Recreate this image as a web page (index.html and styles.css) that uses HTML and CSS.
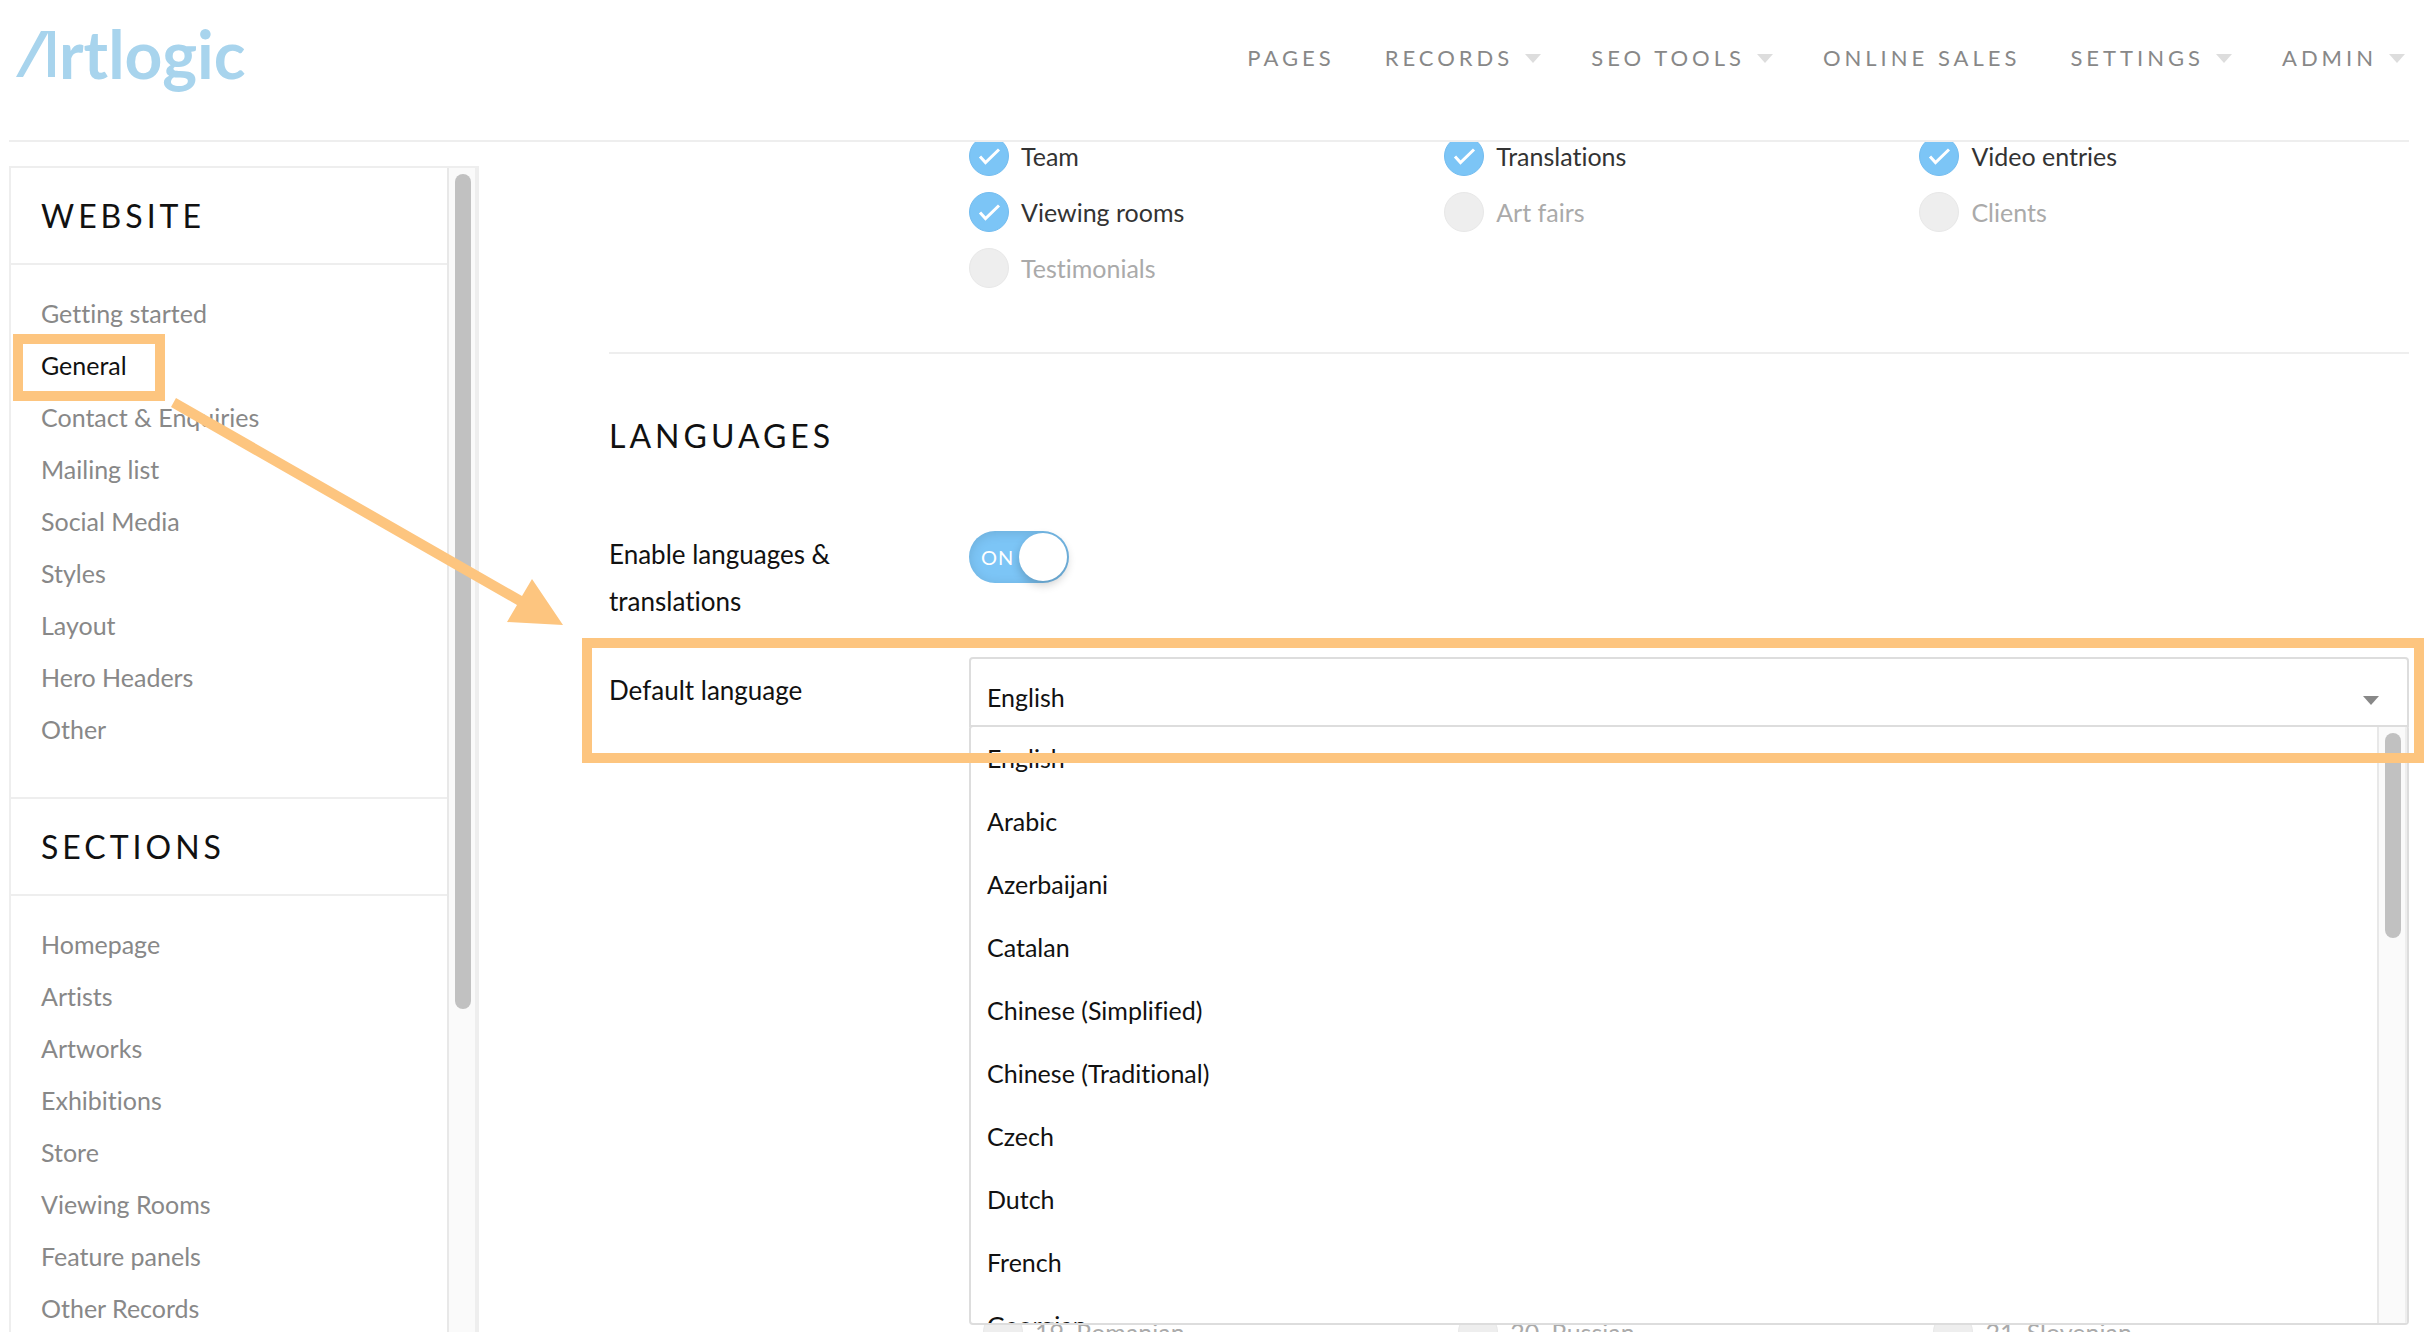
FILE: index.html
```html
<!DOCTYPE html>
<html lang="en">
<head>
    <meta charset="UTF-8">
    <meta name="viewport" content="width=device-width, initial-scale=1.0">
    <title>Artlogic - General settings</title>
    <link rel="stylesheet" href="styles.css">
</head>
<body>
<svg class="defs" aria-hidden="true">
    <symbol id="tick" viewBox="0 0 40 40">
        <path d="M11 20.500L16.500 26.500L30 13.500" fill="none" stroke="#fff" stroke-width="3"/>
    </symbol>
</svg>

<header class="header">
    <a class="logo" href="#" aria-label="Artlogic">
        <svg class="logo-mark" width="40" height="46" viewBox="0 0 40 46" aria-hidden="true">
            <path d="M0 46L25 0H39V46H32V2L7 46Z" fill="#a8d4ed"/>
        </svg>
        <span class="logo-text">rtlogic</span>
    </a>
    <nav class="nav">
        <a href="#">PAGES</a>
        <a href="#" class="has-menu">RECORDS</a>
        <a href="#" class="has-menu">SEO TOOLS</a>
        <a href="#">ONLINE SALES</a>
        <a href="#" class="has-menu">SETTINGS</a>
        <a href="#" class="has-menu">ADMIN</a>
    </nav>
</header>

<div class="page">
    <aside class="sidebar">
        <div class="sidebar-content">
            <h2 class="sidebar-title">WEBSITE</h2>
            <ul class="sidebar-list">
                <li><a href="#">Getting started</a></li>
                <li><a href="#" class="active">General</a></li>
                <li><a href="#">Contact &amp; Enquiries</a></li>
                <li><a href="#">Mailing list</a></li>
                <li><a href="#">Social Media</a></li>
                <li><a href="#">Styles</a></li>
                <li><a href="#">Layout</a></li>
                <li><a href="#">Hero Headers</a></li>
                <li><a href="#">Other</a></li>
            </ul>
            <h2 class="sidebar-title">SECTIONS</h2>
            <ul class="sidebar-list">
                <li><a href="#">Homepage</a></li>
                <li><a href="#">Artists</a></li>
                <li><a href="#">Artworks</a></li>
                <li><a href="#">Exhibitions</a></li>
                <li><a href="#">Store</a></li>
                <li><a href="#">Viewing Rooms</a></li>
                <li><a href="#">Feature panels</a></li>
                <li><a href="#">Other Records</a></li>
            </ul>
        </div>
        <div class="scrollbar"><div class="thumb"></div></div>
    </aside>

    <main class="main">
        <div class="options sections">
            <label class="option"><span class="check"><input type="checkbox" checked><svg><use href="#tick"/></svg></span>Team</label>
            <label class="option"><span class="check"><input type="checkbox" checked><svg><use href="#tick"/></svg></span>Translations</label>
            <label class="option"><span class="check"><input type="checkbox" checked><svg><use href="#tick"/></svg></span>Video entries</label>
            <label class="option"><span class="check"><input type="checkbox" checked><svg><use href="#tick"/></svg></span>Viewing rooms</label>
            <label class="option off"><span class="check"><input type="checkbox"></span>Art fairs</label>
            <label class="option off"><span class="check"><input type="checkbox"></span>Clients</label>
            <label class="option off"><span class="check"><input type="checkbox"></span>Testimonials</label>
        </div>

        <section class="languages">
            <h2>LANGUAGES</h2>
            <div class="row">
                <label class="row-label" for="enable">Enable languages &amp; translations</label>
                <div class="toggle">
                    <input type="checkbox" id="enable" checked>
                    <span class="toggle-text">ON</span>
                    <span class="knob"></span>
                </div>
            </div>
            <div class="row highlighted">
                <label class="row-label" for="language">Default language</label>
                <div class="dropdown">
                    <select id="language">
                        <option>English</option>
                    </select>
                    <div class="menu">
                        <ul class="menu-list" role="listbox" aria-label="Default language">
                            <li role="option" aria-selected="true">English</li>
                            <li role="option">Arabic</li>
                            <li role="option">Azerbaijani</li>
                            <li role="option">Catalan</li>
                            <li role="option">Chinese (Simplified)</li>
                            <li role="option">Chinese (Traditional)</li>
                            <li role="option">Czech</li>
                            <li role="option">Dutch</li>
                            <li role="option">French</li>
                            <li role="option">Georgian</li>
                        </ul>
                        <div class="scrollbar"><div class="thumb"></div></div>
                    </div>
                </div>
            </div>
            <div class="options translations">
                <label class="option off"><span class="check"><input type="checkbox"></span>19. Romanian</label>
                <label class="option off"><span class="check"><input type="checkbox"></span>20. Russian</label>
                <label class="option off"><span class="check"><input type="checkbox"></span>21. Slovenian</label>
            </div>
        </section>
    </main>

    <!-- arrow from the sidebar link to the language field -->
    <svg class="arrow" width="392" height="228" viewBox="0 0 392 228" aria-hidden="true">
        <path d="M5 0L351 198L361 181L392 227L336 224L346 207L0 9Z" fill="#fdc57f"/>
    </svg>
</div>
</body>
</html>
```
FILE: styles.css
```css
* {
    box-sizing: border-box;
}

body {
    font-family: Lato, "Open Sans", sans-serif;
    font-size: 25px;
    font-variant-ligatures: none;
    color: #111;
    background-color: #fff;
    display: flex;
    flex-direction: column;
    height: 100vh;
    margin: 0;
    overflow: hidden;
}

a {
    color: #888;
    text-decoration: none;
}

h2 {
    font-size: 32px;
    font-weight: 400;
    letter-spacing: 4px;
    margin: 0;
}

ul {
    list-style: none;
    margin: 0;
    padding: 0;
}

.defs {
    position: absolute;
    width: 0;
    height: 0;
}

/* Header */
.header {
    display: flex;
    justify-content: space-between;
    align-items: flex-start;
    flex: none;
    height: 142px;
    margin: 0 25px 0 9px;
    border-bottom: 2px solid #eee;
}

.logo {
    display: flex;
    align-items: flex-start;
    padding: 31px 0 0 7px;
}

.logo-text {
    font-size: 66px;
    font-weight: 700;
    line-height: 66px;
    margin-top: -10px;
    padding-left: 3px;
    color: #a8d4ed;
}

.nav {
    display: flex;
    gap: 50px;
    padding: 42px 4px 0 0;
}

.nav a {
    display: flex;
    align-items: center;
    font-size: 22px;
    line-height: 32px;
    letter-spacing: 4px;
}

.nav .has-menu::after {
    content: "";
    margin-left: 12px;
    border: 8px solid transparent;
    border-top: 9px solid #ddd;
    border-bottom: 0;
}

/* Sidebar */
.page {
    display: flex;
    flex: 1;
    min-height: 0;
    position: relative;
}

.sidebar {
    display: flex;
    flex: none;
    width: 470px;
    margin: 24px 0 0 9px;
    border: 2px solid #eee;
    border-right-width: 4px;
    border-bottom: 0;
}

.sidebar-content {
    flex: 1;
}

.sidebar-title {
    padding: 0 30px;
    line-height: 95px;
    border-bottom: 2px solid #eee;
}

.sidebar-list {
    padding: 22px 0 42px;
}

.sidebar-list + .sidebar-title {
    border-top: 2px solid #eee;
}

.sidebar-list li {
    padding: 0 30px;
    line-height: 52px;
}

.sidebar-list a {
    position: relative;
}

.sidebar-list .active {
    color: #111;
}

.active::after {
    content: "";
    position: absolute;
    top: -16px;
    right: -38px;
    bottom: -21px;
    left: -28px;
    border: 10px solid #fdc57f;
}

.scrollbar {
    flex: none;
    width: 28px;
    padding: 6px 4px 6px 6px;
    background-color: #fafafa;
    border-left: 2px solid #e8e8e8;
}

.thumb {
    width: 16px;
    height: 835px;
    border-radius: 8px;
    background-color: #c1c1c1;
}

/* Main column */
.main {
    flex: 1;
    overflow: hidden;
    padding: 0 25px 0 130px;
}

.options {
    display: grid;
    grid-template-columns: repeat(3, 33%);
}

.option {
    display: flex;
    align-items: center;
    gap: 12px;
    height: 56px;
    color: #333;
}

.option.off {
    color: #aaa;
}

.check {
    display: grid;
    width: 40px;
    height: 40px;
}

.check > * {
    grid-area: 1 / 1;
    width: 40px;
    height: 40px;
    margin: 0;
}

.check input {
    appearance: none;
    border-radius: 50%;
    border: 1px solid #e8e8e8;
    background-color: #eee;
}

.check input:checked {
    border-color: #74bdf0;
    background-color: #7cc5f6;
}

.check svg {
    pointer-events: none;
}

.sections {
    margin: -14px 0 56px 20%;
}

.languages {
    border-top: 2px solid #eee;
}

.languages h2 {
    padding: 59px 0 73px;
    line-height: 45px;
}

.row {
    display: flex;
    position: relative;
    margin-bottom: 32px;
}

.row-label {
    flex: 0 0 20%;
    padding-right: 80px;
    font-size: 26px;
    line-height: 47px;
}

.highlighted .row-label {
    padding-top: 10px;
}

.highlighted::after {
    content: "";
    position: absolute;
    top: -19px;
    right: -15px;
    bottom: -36px;
    left: -27px;
    border: 10px solid #fdc57f;
    pointer-events: none;
    z-index: 2;
}

.toggle {
    display: flex;
    align-items: center;
    justify-content: space-between;
    position: relative;
    width: 100px;
    height: 52px;
    padding: 0 2px 0 12px;
    border-radius: 26px;
    background-color: #7cc5f6;
    box-shadow: inset 0 2px 12px rgba(0, 0, 0, 0.12);
}

.toggle input {
    position: absolute;
    inset: 0;
    width: 100%;
    height: 100%;
    margin: 0;
    opacity: 0;
}

.toggle-text {
    font-size: 20px;
    letter-spacing: 1px;
    color: #fff;
}

.knob {
    width: 48px;
    height: 48px;
    border-radius: 50%;
    background-color: #fff;
    box-shadow: 0 4px 10px rgba(0, 0, 0, 0.2);
}

.dropdown {
    flex: 1;
    position: relative;
}

.dropdown::after {
    content: "";
    position: absolute;
    top: 39px;
    right: 30px;
    border: 8px solid transparent;
    border-top: 9px solid #888;
    border-bottom: 0;
    pointer-events: none;
}

.dropdown select {
    appearance: none;
    display: block;
    width: 100%;
    height: 70px;
    padding: 10px 16px 0;
    border: 2px solid #ddd;
    border-radius: 4px 4px 0 0;
    background-color: #fff;
    color: #111;
    font: inherit;
}

.menu {
    display: flex;
    position: absolute;
    top: 68px;
    left: 0;
    width: 100%;
    height: 600px;
    overflow: hidden;
    border: 2px solid #ddd;
    border-radius: 4px;
    background-color: #fff;
    z-index: 1;
}

.menu-list {
    flex: 1;
}

.menu-list li {
    padding: 0 16px;
    line-height: 63px;
}

.menu .scrollbar {
    width: 30px;
    border-right: 2px solid #eee;
}

.menu .thumb {
    height: 205px;
}

/* rest of the form continues behind the open menu */
.translations {
    margin: 577px -14px 0 calc(20% + 14px);
}

.arrow {
    position: absolute;
    top: 256px;
    left: 171px;
    pointer-events: none;
}
```
